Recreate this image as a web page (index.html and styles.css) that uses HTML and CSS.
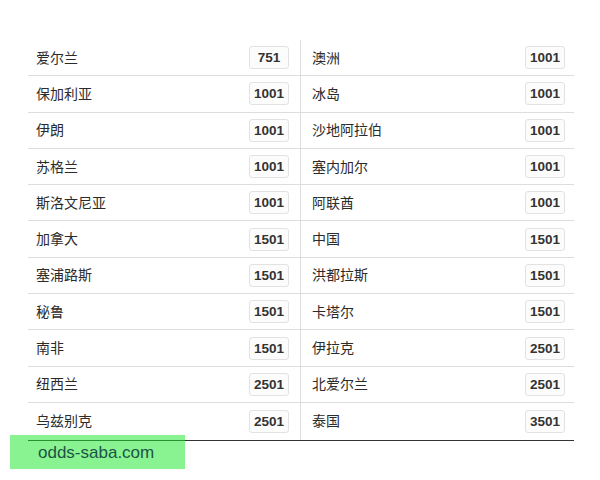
FILE: index.html
```html
<!DOCTYPE html>
<html lang="zh">
<head>
<meta charset="utf-8">
<link rel="stylesheet" href="styles.css">
</head>
<body>
<div class="page">
  <div class="table">
    <div class="row"><div class="cell"><span class="name">爱尔兰</span><span class="badge">751</span></div><div class="cell"><span class="name">澳洲</span><span class="badge">1001</span></div></div>
    <div class="row"><div class="cell"><span class="name">保加利亚</span><span class="badge">1001</span></div><div class="cell"><span class="name">冰岛</span><span class="badge">1001</span></div></div>
    <div class="row"><div class="cell"><span class="name">伊朗</span><span class="badge">1001</span></div><div class="cell"><span class="name">沙地阿拉伯</span><span class="badge">1001</span></div></div>
    <div class="row"><div class="cell"><span class="name">苏格兰</span><span class="badge">1001</span></div><div class="cell"><span class="name">塞内加尔</span><span class="badge">1001</span></div></div>
    <div class="row"><div class="cell"><span class="name">斯洛文尼亚</span><span class="badge">1001</span></div><div class="cell"><span class="name">阿联酋</span><span class="badge">1001</span></div></div>
    <div class="row"><div class="cell"><span class="name">加拿大</span><span class="badge">1501</span></div><div class="cell"><span class="name">中国</span><span class="badge">1501</span></div></div>
    <div class="row"><div class="cell"><span class="name">塞浦路斯</span><span class="badge">1501</span></div><div class="cell"><span class="name">洪都拉斯</span><span class="badge">1501</span></div></div>
    <div class="row"><div class="cell"><span class="name">秘鲁</span><span class="badge">1501</span></div><div class="cell"><span class="name">卡塔尔</span><span class="badge">1501</span></div></div>
    <div class="row"><div class="cell"><span class="name">南非</span><span class="badge">1501</span></div><div class="cell"><span class="name">伊拉克</span><span class="badge">2501</span></div></div>
    <div class="row"><div class="cell"><span class="name">纽西兰</span><span class="badge">2501</span></div><div class="cell"><span class="name">北爱尔兰</span><span class="badge">2501</span></div></div>
    <div class="row last"><div class="cell"><span class="name">乌兹别克</span><span class="badge">2501</span></div><div class="cell"><span class="name">泰国</span><span class="badge">3501</span></div></div>
  </div>
  <div class="watermark">odds-saba.com</div>
</div>
</body>
</html>
```
FILE: styles.css
```css
html, body {
  margin: 0;
  padding: 0;
  background: #ffffff;
}
.page {
  position: relative;
  width: 600px;
  height: 480px;
  padding: 40px 26px 0 28px;
  box-sizing: border-box;
}
.table {
  display: flex;
  flex-direction: column;
  font-family: "Noto Sans CJK SC", "Liberation Sans", sans-serif;
  color: #2b2b2b;
}
.row {
  display: grid;
  grid-template-columns: 272px 1fr;
  height: 36.3px;
  box-sizing: border-box;
  border-bottom: 1px solid #dddddd;
}
.row.last {
  height: 38px;
  border-bottom: 1.5px solid #333333;
}
.cell {
  display: flex;
  align-items: center;
  justify-content: space-between;
  padding: 0 11px 0 8px;
}
.cell + .cell {
  border-left: 1px solid #dddddd;
  padding: 0 9px 0 11px;
}
.name {
  font-size: 14px;
  line-height: 1;
  padding-bottom: 2px;
}
.badge {
  display: flex;
  align-items: center;
  justify-content: center;
  width: 40px;
  height: 23px;
  box-sizing: border-box;
  border: 1px solid #e2e2e2;
  border-radius: 3px;
  background: #fcfcfc;
  font-family: "Liberation Sans", Arial, sans-serif;
  font-weight: bold;
  font-size: 13.5px;
  color: #333333;
}
.watermark {
  position: absolute;
  left: 10px;
  top: 435px;
  width: 175px;
  height: 34px;
  box-sizing: border-box;
  padding-left: 28px;
  padding-top: 2px;
  display: flex;
  align-items: center;
  background: rgba(30, 232, 45, 0.52);
  font-family: "Liberation Sans", Arial, sans-serif;
  font-size: 17px;
  color: #1c5445;
}
```
